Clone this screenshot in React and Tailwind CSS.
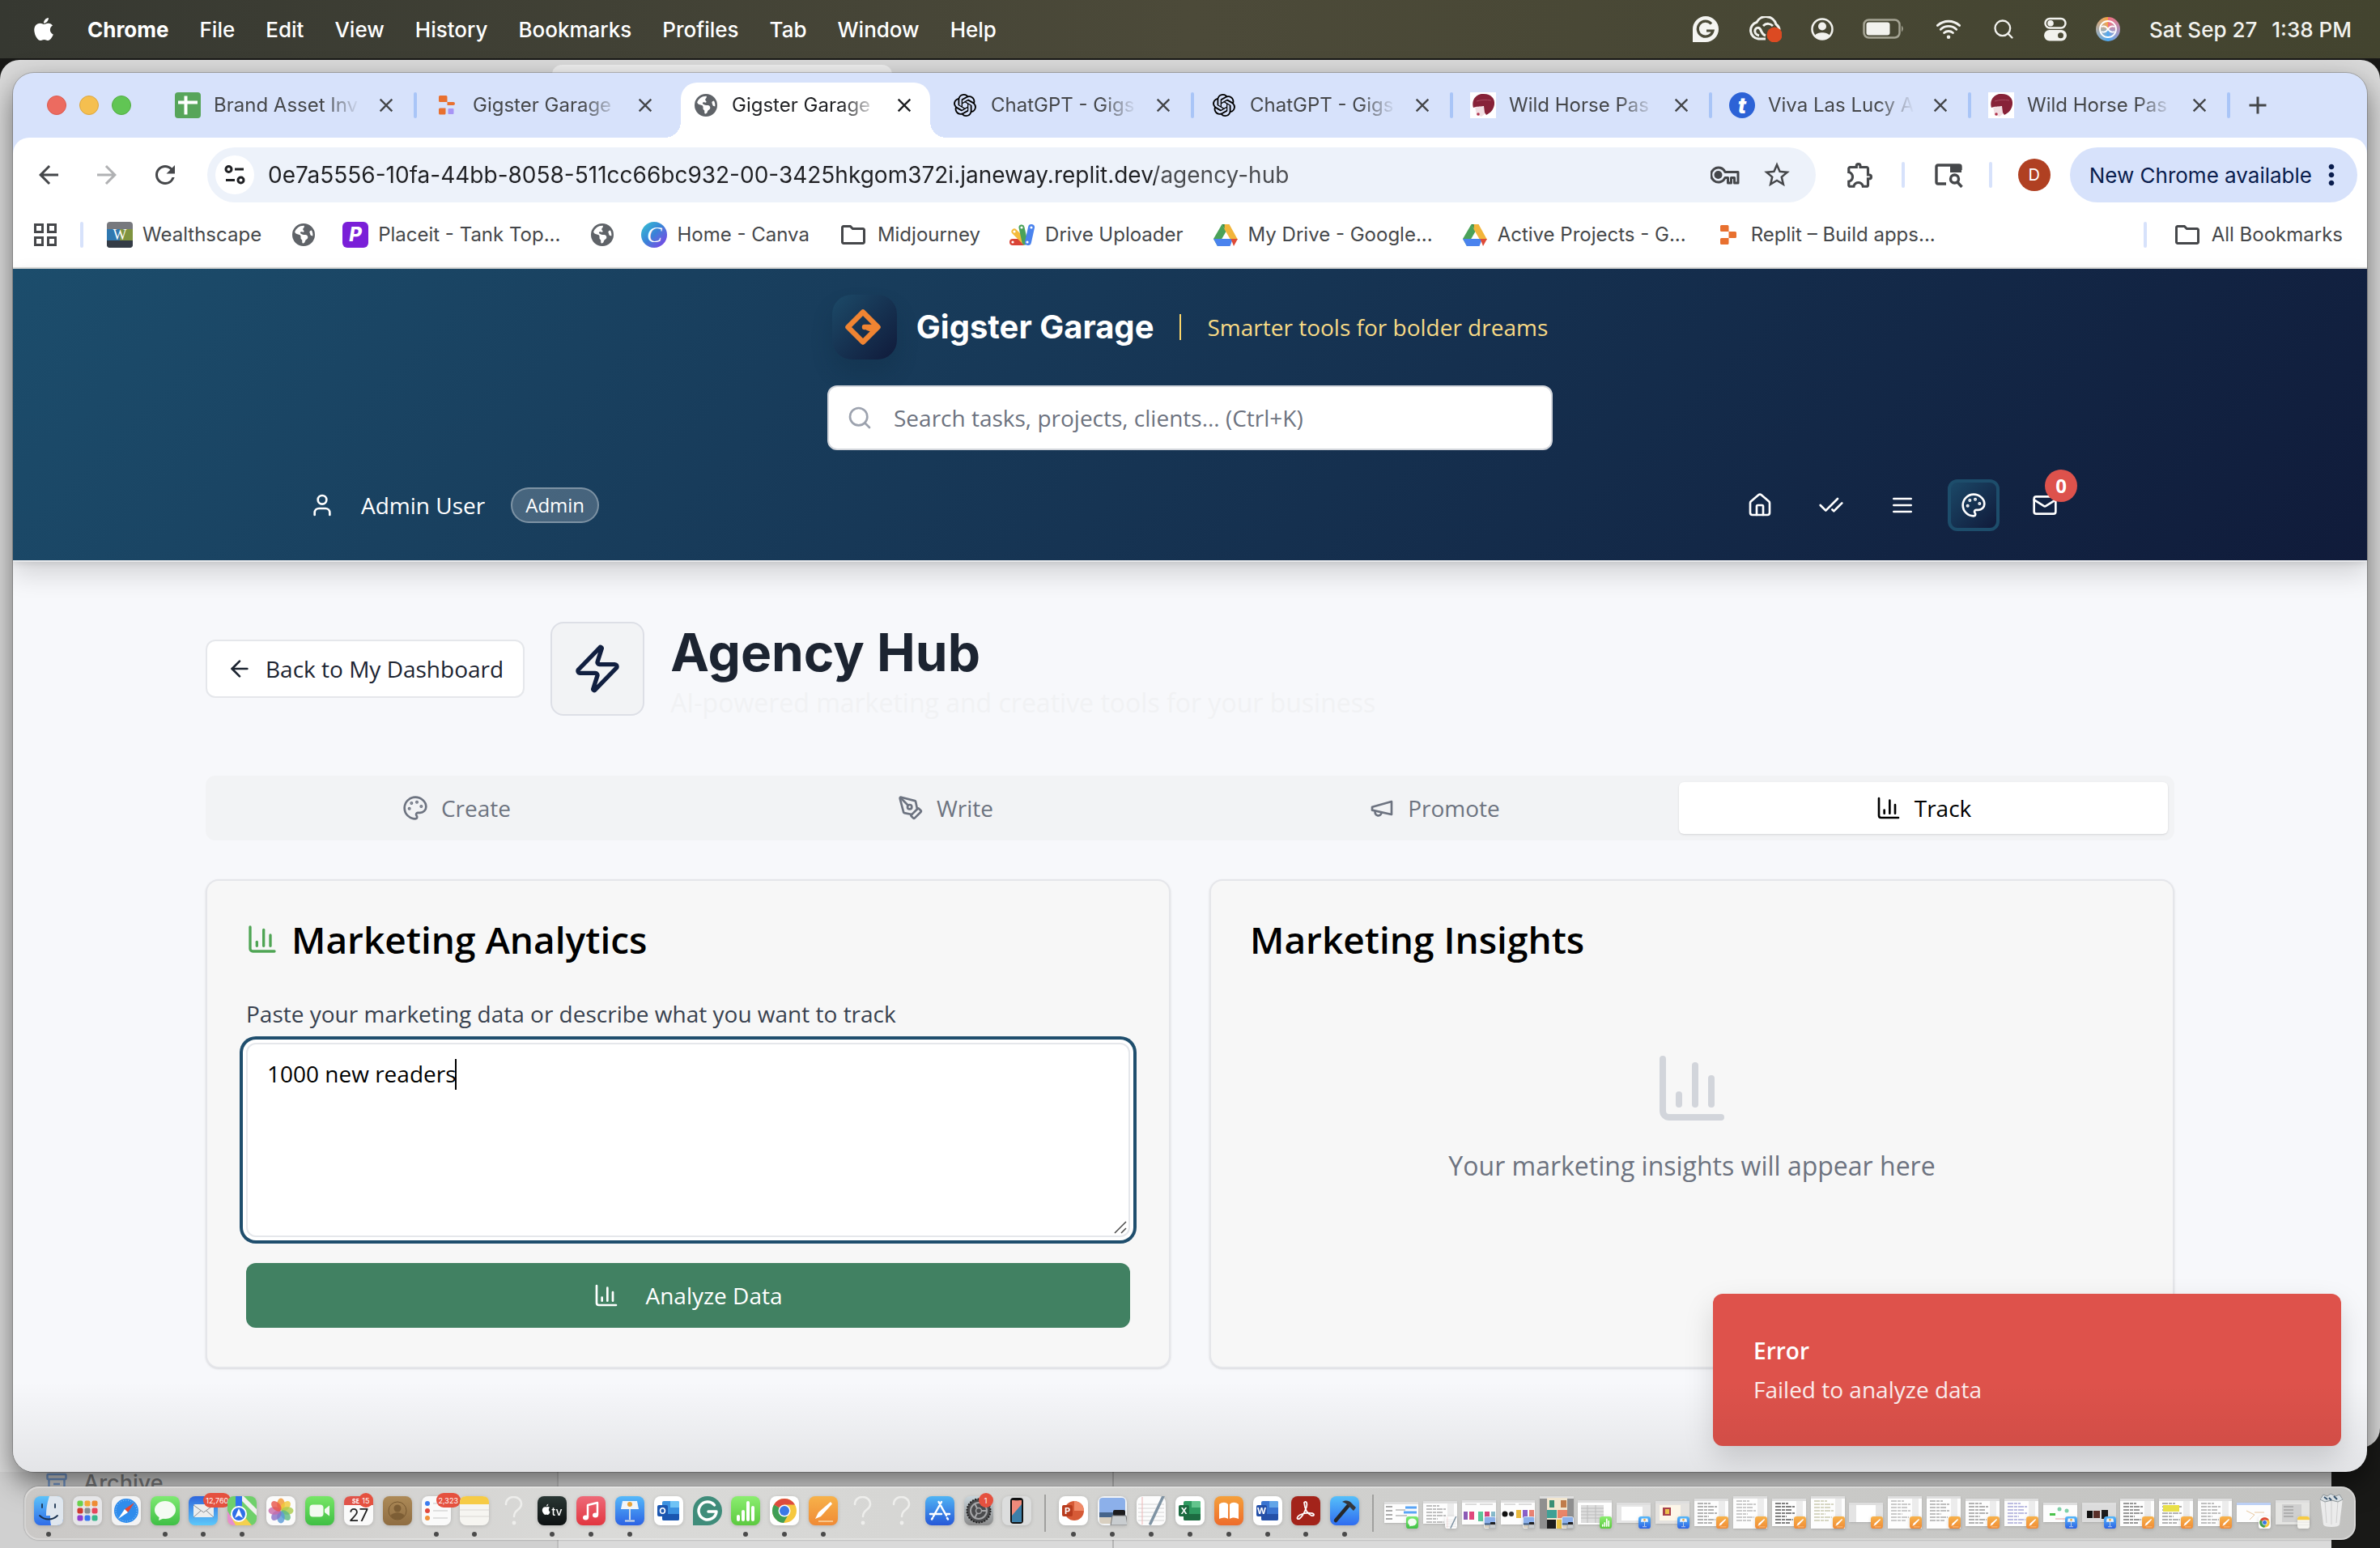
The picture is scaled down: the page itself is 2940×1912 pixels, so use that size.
import React from "react";
import { ArrowLeft, ChartColumn, CheckCheck, House, PenTool, Search, User, Zap } from "lucide-react";
import { FaApple, FaEarthAmericas } from "react-icons/fa6";
import { MdArrowBack, MdArrowForward, MdRefresh, MdStarBorder, MdOutlineExtension, MdOutlineFolder, MdClose, MdAdd, MdMoreVert } from "react-icons/md";
import { SiOpenai } from "react-icons/si";
import { IoWifi } from "react-icons/io5";

/* ---------- shared line icons ---------- */

function Line({ className, children }) {
  return (
    <svg viewBox="0 0 24 24" fill="none" stroke="currentColor" strokeWidth="2" strokeLinecap="round" strokeLinejoin="round" className={className} aria-hidden="true">
      {children}
    </svg>
  );
}

function Palette({ className }) {
  return (
    <Line className={className}>
      <circle cx="13.5" cy="6.5" r=".5" fill="currentColor" />
      <circle cx="17.5" cy="10.5" r=".5" fill="currentColor" />
      <circle cx="8.5" cy="7.5" r=".5" fill="currentColor" />
      <circle cx="6.5" cy="12.5" r=".5" fill="currentColor" />
      <path d="M12 2C6.5 2 2 6.5 2 12s4.5 10 10 10c.926 0 1.648-.746 1.648-1.688 0-.437-.18-.835-.437-1.125-.29-.289-.438-.652-.438-1.125a1.64 1.64 0 0 1 1.668-1.668h1.996c3.051 0 5.555-2.503 5.555-5.554C21.965 6.012 17.461 2 12 2z" />
    </Line>
  );
}

function Megaphone({ className }) {
  return (
    <Line className={className}>
      <path d="m3 11 18-5v12L3 14v-3z" />
      <path d="M11.6 16.8a3 3 0 1 1-5.8-1.6" />
    </Line>
  );
}

function MailIcon({ className }) {
  return (
    <Line className={className}>
      <rect width="20" height="16" x="2" y="4" rx="2" />
      <path d="m22 7-8.97 5.7a1.94 1.94 0 0 1-2.06 0L2 7" />
    </Line>
  );
}

function MenuLines({ className }) {
  return (
    <Line className={className}>
      <path d="M4 6h16M4 12h16M4 18h16" />
    </Line>
  );
}

/* ---------- macOS menu bar ---------- */

const menus = ["File", "Edit", "View", "History", "Bookmarks", "Profiles", "Tab", "Window", "Help"];

function MenuBar() {
  return (
    <header className="relative flex h-[72px] items-center justify-between bg-linear-to-r from-[#363831] via-[#4c4a39] to-[#43442f] pr-[35px] pl-[38px] text-[26px] font-medium text-white">
      <nav className="flex items-center gap-[38px]" aria-label="Menu bar">
        <button aria-label="Apple menu"><FaApple className="size-8" /></button>
        <button className="font-bold">Chrome</button>
        {menus.map((m) => (
          <button key={m}>{m}</button>
        ))}
      </nav>
      <div className="flex items-center gap-9 text-[#f2f2ee]">
        <svg viewBox="0 0 32 32" className="size-8">
          <path d="M0 32V16A16 16 0 1 1 16 32z" fill="#f5f5f2" />
          <path d="M23 9.500A9.500 9.500 0 1 0 25 18H17" fill="none" stroke="#4b4a38" strokeWidth="3.200" />
        </svg>
        <svg viewBox="0 0 42 32" className="h-8 w-[42px]" fill="none" stroke="#f2f2ee" strokeWidth="3">
          <path d="M22 28H13a10.500 10.500 0 0 1-2-20.500A13 13 0 0 1 35 10q4 3 4 7" />
          <path d="M22 24c-4-1-4-3-6-7-2-4-6-3-7 0s1 6 5 7M19 12c4-4 9-3 12 0" />
          <circle cx="33" cy="23" r="9.500" fill="#dc4a22" stroke="none" />
        </svg>
        <svg viewBox="0 0 28 28" className="size-7" fill="#f2f2ee">
          <circle cx="14" cy="14" r="12.500" fill="none" stroke="#f2f2ee" strokeWidth="2.500" />
          <circle cx="14" cy="10.500" r="5" />
          <path d="M5 22c2-5 16-5 18 0-4 6-14 6-18 0z" />
        </svg>
        <svg viewBox="0 0 52 26" className="h-[26px] w-[52px]">
          <rect x="1.500" y="1.500" width="44" height="22" rx="6" fill="none" stroke="#a5a494" strokeWidth="2.500" />
          <rect x="4.500" y="4.500" width="29" height="16" rx="3" fill="#f2f2ee" />
          <path d="M48 8.500q3.500 4 0 8z" fill="#a5a494" />
        </svg>
        <IoWifi className="size-9" />
        <Search className="size-7" />
        <svg viewBox="0 0 28 30" className="h-[30px] w-7">
          <rect x="1.500" y="2" width="25" height="11.500" rx="5.700" fill="none" stroke="#f2f2ee" strokeWidth="2.500" />
          <circle cx="8" cy="7.700" r="3.800" fill="#f2f2ee" />
          <rect x="0" y="16" width="28" height="13.500" rx="6.700" fill="#f2f2ee" />
          <circle cx="20.500" cy="22.700" r="3.500" fill="#4a4935" />
        </svg>
        <span className="flex size-[30px] items-center justify-center rounded-full bg-conic from-[#f26a7c] via-[#4aa8f0] to-[#f6a23c]">
          <svg viewBox="0 0 24 24" className="size-6" fill="none" stroke="#fff" strokeWidth="1.800">
            <circle cx="12" cy="12" r="10" />
            <path d="M4 9c4-2 6 0 8 3s4 5 8 3M4 15c4 2 6 0 8-3s4-5 8-3" />
          </svg>
        </span>
        <span className="flex gap-[18px] whitespace-nowrap">
          <span>Sat Sep 27</span>
          <span>1:38 PM</span>
        </span>
      </div>
    </header>
  );
}

/* ---------- favicons ---------- */

function SheetsIcon() {
  return (
    <svg viewBox="0 0 32 32" className="size-8">
      <rect width="32" height="32" rx="4" fill="#57a55a" />
      <path d="M13.500 4.500v23M4 12.500h24" stroke="#fff" strokeWidth="4" />
    </svg>
  );
}
function ReplitMulti() {
  return (
    <svg viewBox="0 0 32 32" className="size-8">
      <path d="M6 5.500q0-1.500 1.500-1.500H15q1.500 0 1.500 1.500V12H7.500Q6 12 6 10.500zM16.500 12H24q2 0 2 2t-2 2h-7.500zM6 21q0-1.500 1.500-1.500h7V26q0 1.500-1.500 1.500H7.500Q6 27.500 6 26z" fill="#e8702f" />
      <rect x="17.500" y="20" width="7" height="7" rx="1" fill="#a895f5" />
    </svg>
  );
}
function ReplitIcon({ className }) {
  return (
    <svg viewBox="0 0 20 24" className={className}>
      <path d="M0 1.500Q0 0 1.500 0H9q1.500 0 1.500 1.500V8H1.500Q0 8 0 6.500zM10.500 8h8q1.500 0 1.500 1.500v5q0 1.500-1.500 1.500h-8zM0 17.500Q0 16 1.500 16h9v6.500Q10.500 24 9 24H1.500Q0 24 0 22.500z" fill="#e8702f" />
    </svg>
  );
}
function HorseIcon() {
  return (
    <svg viewBox="0 0 32 32" className="size-8">
      <rect width="32" height="32" fill="#fff" />
      <path d="M6 18l2 10 6 2 5-4-1-8z" fill="#f1dfe3" />
      <path d="M4 19C1 8 9 1 17 2c9 0 14 6 13 13-1 6-4 10-10 13l-2-3-1-8c-5 1-9 0-13 2z" fill="#872238" />
      <path d="M8 11c6-2 12-2 18-1" stroke="#a84b60" strokeWidth="1" fill="none" />
      <circle cx="10" cy="27" r="1.800" fill="#b0304a" />
    </svg>
  );
}
function TixIcon() {
  return (
    <span className="flex size-8 items-center justify-center rounded-full bg-[#2c62d6] text-[27px] leading-none font-extrabold text-white italic">t</span>
  );
}
const Globe = () => <FaEarthAmericas className="size-7 text-[#5f6368]" />;
const Gpt = () => <SiOpenai className="size-[28px] text-black" />;

function DriveIcon() {
  return (
    <svg viewBox="0 0 30 27" className="h-[27px] w-[30px]">
      <path d="M10.500 0 0 18l5 9 10.500-18z" fill="#4ba259" />
      <path d="M10.500 0h9L15.500 9z" fill="#2f8a43" />
      <path d="M19.500 0h-5.800l-.2 6 7.500 13H30z" fill="#f2b53a" />
      <path d="M0 18h24l-3.500 9H5z" fill="#4a83ee" />
      <path d="M30 18h-8.500L25 27z" fill="#df4b37" />
    </svg>
  );
}
function UploaderIcon() {
  return (
    <svg viewBox="0 0 32 28" className="h-7 w-8">
      <rect x="0" y="19" width="20" height="8" rx="4" fill="#da4436" />
      <path d="m6 10 12 12" stroke="#f4bb3c" strokeWidth="7" strokeLinecap="round" />
      <path d="m15 5 4 18" stroke="#4aa25a" strokeWidth="7" strokeLinecap="round" />
      <path d="m27 5-4 18" stroke="#4a83ee" strokeWidth="8" strokeLinecap="round" />
      <g fill="#fff"><circle cx="4" cy="23" r="1.600" /><circle cx="6" cy="10" r="1.600" /><circle cx="15" cy="5" r="1.600" /><circle cx="27" cy="5" r="1.600" /><circle cx="22" cy="23" r="1.600" /></g>
    </svg>
  );
}

/* ---------- browser chrome ---------- */

const tabs = [
  { title: "Brand Asset Inv", icon: SheetsIcon },
  { title: "Gigster Garage", icon: ReplitMulti },
  { title: "Gigster Garage", icon: Globe, active: true },
  { title: "ChatGPT - Gigs", icon: Gpt },
  { title: "ChatGPT - Gigs", icon: Gpt },
  { title: "Wild Horse Pas", icon: HorseIcon },
  { title: "Viva Las Lucy A", icon: TixIcon },
  { title: "Wild Horse Pas", icon: HorseIcon },
];

function Tab({ title, icon: Icon, active, quiet }) {
  return (
    <div className="relative flex h-full min-w-0 max-w-[320px] flex-1 items-center">
      {active && (
        <div className="absolute inset-x-[6px] top-3 bottom-0 rounded-t-[20px] bg-white">
          <div className="absolute bottom-0 -left-5 size-5 bg-[radial-gradient(circle_at_0_0,transparent_20px,white_20px)]" />
          <div className="absolute -right-5 bottom-0 size-5 bg-[radial-gradient(circle_at_100%_0,transparent_20px,white_20px)]" />
        </div>
      )}
      <div className={active ? "relative flex w-full items-center pl-[21px] text-[#1f2023]" : "relative flex w-full items-center pl-[21px] text-[#45474a]"}>
        <span className="flex size-8 shrink-0 items-center justify-center"><Icon /></span>
        <span className="ml-4 min-w-0 flex-1 mask-r-from-75% text-[24px] leading-8 whitespace-nowrap">{title}</span>
        <button aria-label="Close tab" className="ml-[18px] flex size-7 shrink-0 items-center justify-center"><MdClose className="size-7" /></button>
        <span className={quiet ? "ml-[20px] h-8 w-1 shrink-0" : "ml-[20px] h-8 w-1 shrink-0 rounded-full bg-[#a9c5f7]"} />
      </div>
    </div>
  );
}

function TabStrip() {
  return (
    <div className="flex h-20 items-center bg-[#d7e2fb] pl-[42px]">
      <div className="mr-[33px] flex gap-4">
        <button aria-label="Close" className="size-6 rounded-full border border-[#dc5a4e] bg-[#ec6b60]" />
        <button aria-label="Minimise" className="size-6 rounded-full border border-[#dda63c] bg-[#f5bf4f]" />
        <button aria-label="Zoom" className="size-6 rounded-full border border-[#53ad42] bg-[#61c554]" />
      </div>
      {tabs.map((t, i) => (
        <Tab key={i} {...t} quiet={i === 1 || i === 2} />
      ))}
      <button aria-label="New tab" className="ml-4 flex size-9 items-center justify-center text-[#45474a]"><MdAdd className="size-9" /></button>
    </div>
  );
}

function Toolbar() {
  return (
    <div className="bg-[#d7e2fb]">
      <div className="flex h-20 items-center rounded-t-[20px] bg-white pt-3 pr-3 text-[#45474a]">
        <div className="flex items-center gap-9 pl-[26px]">
          <button aria-label="Back"><MdArrowBack className="size-9" /></button>
          <button aria-label="Forward" className="text-[#b0b1b3]"><MdArrowForward className="size-9" /></button>
          <button aria-label="Reload"><MdRefresh className="size-9" /></button>
        </div>
        <div className="ml-[34px] flex h-[68px] flex-1 items-center rounded-full bg-[#edf2fa] pl-[10px]">
          <button aria-label="Site information" className="flex size-12 shrink-0 items-center justify-center rounded-full bg-white text-[#1f2023]">
            <svg viewBox="0 0 26 26" className="size-[26px]" fill="none" stroke="currentColor" strokeWidth="3">
              <circle cx="5.500" cy="6" r="3.500" /><path d="M13 6h11" />
              <circle cx="20.500" cy="19.500" r="3.500" /><path d="M2 19.500h11" />
            </svg>
          </button>
          <input
            aria-label="Address"
            defaultValue="0e7a5556-10fa-44bb-8058-511cc66bc932-00-3425hkgom372i.janeway.replit.dev/agency-hub"
            className="ml-[17px] h-10 flex-1 bg-[linear-gradient(90deg,#1f2023_1096px,#4a4c50_1096px)] bg-clip-text text-[28px] text-transparent outline-none"
          />
          <svg viewBox="0 0 36 24" className="h-6 w-9" fill="none" stroke="currentColor" strokeWidth="3">
            <path d="M18 8.500a9 9 0 1 0 0 7h3.500V22h4v-6.500h4V22h4.500V8.500z" strokeLinejoin="round" />
            <circle cx="9.500" cy="12" r="3.500" fill="currentColor" />
          </svg>
          <button aria-label="Bookmark this page" className="mr-[29px] ml-[27px]"><MdStarBorder className="size-[38px]" /></button>
        </div>
        <div className="flex items-center">
          <button aria-label="Extensions" className="ml-9"><MdOutlineExtension className="size-[38px]" /></button>
          <span className="ml-[32px] h-8 w-1 rounded-full bg-[#d7e2fb]" />
          <svg viewBox="0 0 36 32" className="ml-[36px] h-8 w-9" fill="none" stroke="currentColor" strokeWidth="3.400">
            <path d="M15 27H5q-2 0-2-2V6q0-2 2-2h26q2 0 2 2v4" />
            <path d="M20 3h14v10H20z" fill="currentColor" stroke="none" />
            <circle cx="25.500" cy="21" r="5" /><path d="m29 25 5.500 6" />
          </svg>
          <span className="ml-[32px] h-8 w-1 rounded-full bg-[#d7e2fb]" />
          <span className="ml-8 flex size-10 items-center justify-center rounded-full bg-[#b04022] text-[20px] text-white">D</span>
          <button className="ml-6 flex h-[68px] items-center rounded-full bg-[#d7e2fb] pr-3 pl-6 text-[26px] whitespace-nowrap text-[#0a1d4d]">
            New Chrome available
            <MdMoreVert className="ml-1 size-10" />
          </button>
        </div>
      </div>
    </div>
  );
}

function Bookmark({ icon, label }) {
  return (
    <a href="#" className="flex items-center gap-3 whitespace-nowrap">
      <span className="flex min-w-8 justify-center">{icon}</span>
      {label && <span className="pr-1">{label}</span>}
    </a>
  );
}

function BookmarksBar() {
  return (
    <div className="flex h-[82px] items-center border-b-2 border-[#e0e0de] bg-white pr-[26px] pl-[26px] text-[24px] text-[#45474a]">
      <svg viewBox="0 0 28 28" className="size-7" fill="none" stroke="currentColor" strokeWidth="3">
        <rect x="1.500" y="1.500" width="9" height="9" /><rect x="17.500" y="1.500" width="9" height="9" />
        <rect x="1.500" y="17.500" width="9" height="9" /><rect x="17.500" y="17.500" width="9" height="9" />
      </svg>
      <span className="mr-[29px] ml-[29px] h-8 w-1 rounded-full bg-[#d7e2fb]" />
      <nav aria-label="Bookmarks" className="flex items-center gap-8">
        <Bookmark
          label="Wealthscape"
          icon={
            <svg viewBox="0 0 32 32" className="size-8">
              <rect width="32" height="32" rx="4" fill="#77797e" />
              <path d="M0 9h16v14H0z" fill="#2f78b0" /><path d="M16 9h16v14H16z" fill="#7f9440" />
              <path d="M0 23h32v5q0 4-4 4H4q-4 0-4-4z" fill="#343c46" />
              <text x="16" y="22" fontSize="18" fontFamily="Liberation Serif" fill="#fff" textAnchor="middle">W</text>
            </svg>
          }
        />
        <Bookmark icon={<Globe />} />
        <Bookmark label="Placeit - Tank Top..." icon={<span className="flex size-8 items-center justify-center rounded-md bg-[#7a1fd8] text-[24px] font-extrabold text-white italic">P</span>} />
        <Bookmark icon={<Globe />} />
        <Bookmark label="Home - Canva" icon={<span className="flex size-8 items-center justify-center rounded-full bg-linear-to-br from-[#35c5cf] via-[#3b7fd8] to-[#7a2be8] font-['Liberation_Serif'] text-[28px] leading-none text-white italic">C</span>} />
        <Bookmark label="Midjourney" icon={<MdOutlineFolder className="size-9" />} />
        <Bookmark label="Drive Uploader" icon={<UploaderIcon />} />
        <Bookmark label="My Drive - Google..." icon={<DriveIcon />} />
        <Bookmark label="Active Projects - G..." icon={<DriveIcon />} />
        <Bookmark label="Replit – Build apps..." icon={<ReplitIcon className="h-6 w-5" />} />
      </nav>
      <span className="mr-[32px] ml-auto h-8 w-1 rounded-full bg-[#d7e2fb]" />
      <Bookmark label="All Bookmarks" icon={<MdOutlineFolder className="size-9" />} />
    </div>
  );
}

/* ---------- Gigster Garage page ---------- */

function AppHeader() {
  return (
    <header className="relative flex flex-col items-center border-b-2 border-[#e9eaec] bg-[linear-gradient(135deg,#1c4d6c,#101b3a)] bg-clip-padding pt-8 pb-[36px] text-white shadow-[0_16px_30px_rgba(0,0,0,0.14),0_2px_8px_rgba(0,0,0,0.1)]">
      <div className="flex items-center">
        <span className="flex size-20 items-center justify-center rounded-3xl bg-[linear-gradient(135deg,#1c4a68,#101a3a)] shadow-[0_16px_24px_rgba(10,40,60,0.25)]">
          <svg viewBox="0 0 46 46" className="mr-1 size-[46px]" fill="none" stroke="#f08432" strokeWidth="6.500" strokeLinejoin="round" strokeLinecap="round">
            <path d="M41.500 23 23 41.500 4.500 23 23 4.500 41.500 23H25" />
            <path d="m38 25-10 1 6 2z" fill="#f08432" strokeWidth="2" />
          </svg>
        </span>
        <span className="ml-6 font-['Inter'] text-[40px] leading-[56px] font-bold">Gigster Garage</span>
        <span className="mx-[32px] h-8 w-[2px] bg-[#fbd56a]" />
        <span className="text-[28px] leading-10 font-medium text-[#f8da85]">Smarter tools for bolder dreams</span>
      </div>
      <label className="mt-8 flex h-20 w-[896px] items-center rounded-xl border-2 border-[#d3d6dc] bg-white pl-[22px] text-[#9ca2ae]">
        <Search className="size-8" />
        <input aria-label="Search" placeholder="Search tasks, projects, clients... (Ctrl+K)" className="ml-[26px] h-full flex-1 text-[28px] text-gray-800 outline-none placeholder:text-[#6d7380]" />
      </label>
      <div className="mt-9 flex h-16 w-full max-w-[2176px] items-center justify-between">
        <div className="flex items-center text-[28px] font-medium">
          <User className="size-8" />
          <span className="ml-8">Admin User</span>
          <span className="ml-8 flex h-11 items-center rounded-full border-2 border-white/30 bg-white/20 px-4 text-[24px]">Admin</span>
        </div>
        <nav aria-label="Main" className="flex gap-6">
          <button aria-label="Home" className="flex size-16 items-center justify-center"><House className="size-8" /></button>
          <button aria-label="Tasks" className="flex size-16 items-center justify-center"><CheckCheck className="size-8" /></button>
          <button aria-label="Menu" className="flex size-16 items-center justify-center"><MenuLines className="size-8" /></button>
          <button aria-label="Agency hub" className="flex size-16 items-center justify-center rounded-xl border-4 border-[#1d4d6b] bg-[linear-gradient(135deg,#1b4867,#101a3a)]"><Palette className="size-8" /></button>
          <button aria-label="Messages" className="relative flex size-16 items-center justify-center">
            <MailIcon className="size-8" />
            <span className="absolute -top-3 -right-2 flex size-10 items-center justify-center rounded-full bg-[#dd524c] text-[24px] font-bold">0</span>
          </button>
        </nav>
      </div>
    </header>
  );
}

const sections = [
  { label: "Create", icon: Palette },
  { label: "Write", icon: PenTool },
  { label: "Promote", icon: Megaphone },
  { label: "Track", icon: ChartColumn, active: true },
];

function HubPage() {
  return (
    <main className="flex flex-1 flex-col bg-[#f7f8fb] px-[238px] pt-[66px] pb-32">
      <div className="flex items-center gap-8">
        <button className="flex h-[72px] items-center gap-4 rounded-xl border-2 border-[#e5e7eb] bg-white px-6 text-[28px] font-medium text-[#1c2431]">
          <ArrowLeft className="size-8" />
          Back to My Dashboard
        </button>
        <span className="flex size-[116px] items-center justify-center rounded-2xl border-2 border-[#dddfe6] bg-[#f2f3f5] text-[#111f40]">
          <Zap className="size-16" />
        </span>
        <div className="pt-2">
          <h1 className="font-['Inter'] text-[64px] leading-[76px] font-bold text-[#1c2431]">Agency Hub</h1>
          <p className="text-[32px] leading-[48px] text-[#f1f2f4]">AI-powered marketing and creative tools for your business</p>
        </div>
      </div>

      <div role="tablist" className="mt-[66px] grid h-20 grid-cols-4 rounded-xl bg-[#f2f3f5] p-2">
        {sections.map(({ label, icon: Icon, active }) => (
          <button
            key={label}
            role="tab"
            aria-selected={!!active}
            className={
              active
                ? "flex items-center justify-center gap-4 rounded-md bg-white text-[28px] font-medium text-black shadow-sm"
                : "flex items-center justify-center gap-4 rounded-md text-[28px] font-medium text-[#6d7380]"
            }
          >
            <Icon className="size-8" />
            {label}
          </button>
        ))}
      </div>

      <div className="mt-12 grid grid-cols-2 gap-12">
        <section className="flex flex-col rounded-2xl border-2 border-[#e5e6ea] bg-[#f7f7f7] p-12 shadow-sm">
          <h2 className="flex h-12 items-center gap-4 text-[46px] leading-[48px] font-semibold text-black">
            <ChartColumn className="size-10 text-[#4fa554]" />
            Marketing Analytics
          </h2>
          <label htmlFor="data" className="mt-12 text-[28px] leading-10 font-medium text-[#39424f]">
            Paste your marketing data or describe what you want to track
          </label>
          <div className="relative mt-4">
            <textarea
              id="data"
              defaultValue="1000 new readers"
              className="block h-60 w-full resize-none rounded-xl border-2 border-[#e5e7eb] bg-white px-6 py-4 text-[28px] leading-10 text-black ring-4 ring-[#1f4e6d] ring-offset-4 ring-offset-white outline-none"
            />
            <span className="absolute top-5 left-[258px] h-[38px] w-[2px] bg-black" />
            <svg viewBox="0 0 16 16" className="absolute right-1 bottom-1 size-4" stroke="#4a4a4a" strokeWidth="1.500">
              <path d="M1 15 15 1M9 15l6-6" />
            </svg>
          </div>
          <button className="mt-8 flex h-20 items-center justify-center gap-8 rounded-xl bg-[#418162] text-[28px] font-medium text-white">
            <ChartColumn className="size-8" />
            Analyze Data
          </button>
        </section>

        <section className="rounded-2xl border-2 border-[#e5e6ea] bg-[#f7f7f7] p-12 shadow-sm">
          <h2 className="flex h-12 items-center text-[46px] leading-[48px] font-semibold text-black">Marketing Insights</h2>
          <div className="mt-12 flex flex-col items-center py-16">
            <ChartColumn className="size-24 text-[#d2d5db]" />
            <p className="mt-6 text-[32px] leading-[48px] text-[#6d7380]">Your marketing insights will appear here</p>
          </div>
        </section>
      </div>
    </main>
  );
}

function BrowserWindow() {
  return (
    <div className="relative mx-4 mt-[18px] flex flex-1 flex-col overflow-hidden rounded-[26px] shadow-[0_14px_34px_rgba(0,0,0,0.5)] outline outline-black/20">
      <TabStrip />
      <Toolbar />
      <BookmarksBar />
      <div className="relative flex flex-1 flex-col font-['Open_Sans',sans-serif]">
        <AppHeader />
        <HubPage />
        <div role="alert" className="absolute right-8 bottom-8 w-[776px] rounded-xl bg-[#de524b] px-[50px] py-12 text-[28px] text-white shadow-[0_16px_36px_rgba(0,0,0,0.15)]">
          <p className="leading-[44px] font-semibold">Error</p>
          <p className="mt-1 leading-[44px] text-white/90">Failed to analyze data</p>
        </div>
        <div className="pointer-events-none absolute inset-x-0 bottom-0 h-28 bg-linear-to-b from-transparent to-black/8" />
      </div>
    </div>
  );
}

/* ---------- dock ---------- */

function Tile({ from, children, fill }) {
  return (
    <svg viewBox="0 0 36 36" className="size-9 drop-shadow-sm">
      <defs>
        {from && (
          <linearGradient id={"g" + from.join("").replace(/#/g, "")} x1="0" y1="0" x2="0" y2="1">
            <stop offset="0" stopColor={from[0]} /><stop offset="1" stopColor={from[1]} />
          </linearGradient>
        )}
      </defs>
      <rect width="36" height="36" rx="8" fill={from ? "url(#g" + from.join("").replace(/#/g, "") + ")" : fill} />
      {children}
    </svg>
  );
}

const white = { fill: "none", stroke: "#fff", strokeWidth: 2.5, strokeLinecap: "round", strokeLinejoin: "round" };

function Letter({ children, x = 18, y = 24, size = 18, color = "#fff", weight = 700 }) {
  return <text x={x} y={y} fontSize={size} fill={color} fontWeight={weight} fontFamily="Inter" textAnchor="middle">{children}</text>;
}

function Office({ dark, mid, light, letter, round }) {
  return (
    <Tile fill="#fff">
      {round ? <circle cx="19" cy="18" r="12" fill={mid} /> : <rect x="10" y="6" width="21" height="24" rx="2" fill={mid} />}
      {round ? <path d="M19 6a12 12 0 0 1 12 12H19z" fill={light} /> : <path d="M20 6h9q2 0 2 2v6H20z" fill={light} />}
      {!round && <path d="M10 22h21v6q0 2-2 2H12q-2 0-2-2z" fill={dark} />}
      <rect x="4" y="11" width="13" height="14" rx="2" fill={dark} />
      <Letter x={10.5} y={22} size={11}>{letter}</Letter>
    </Tile>
  );
}

const Finder = () => (
  <Tile from={["#5cc3fa", "#2f6ce8"]}>
    <path d="M19 0h9q8 0 8 8v20q0 8-8 8h-7c-1-4-1-8-1-12h-5C15 14 17 6 19 0z" fill="#dfe6ee" />
    <path d="M10 10v4M26 10v4M7 24c6 6 16 6 22 0" fill="none" stroke="#1c3350" strokeWidth="1.800" strokeLinecap="round" />
  </Tile>
);
const Launchpad = () => (
  <Tile fill="#e6e6e8">
    {["#6ad14c", "#f2a93a", "#ee8c34", "#cf3a30", "#8b8d90", "#e8465c", "#8f3fd0", "#3878f0", "#3bb88c"].map((c, i) => (
      <rect key={i} x={5.5 + (i % 3) * 9} y={5.5 + Math.floor(i / 3) * 9} width="7" height="7" rx="2" fill={c} />
    ))}
  </Tile>
);
const Safari = () => (
  <Tile fill="#f3f3f4">
    <circle cx="18" cy="18" r="15" fill="#2f8cec" />
    <circle cx="18" cy="18" r="13" fill="none" stroke="#a8d3fa" strokeWidth="1" strokeDasharray="1 2" />
    <path d="m28 8-8 12-4-4z" fill="#e8452f" /><path d="M8 28l8-12 4 4z" fill="#fff" />
  </Tile>
);
const Messages = () => (
  <Tile from={["#7eea72", "#3fbf45"]}>
    <ellipse cx="18" cy="17" rx="13" ry="11" fill="#f4fbf3" /><path d="m11 24-1 6 7-3z" fill="#f4fbf3" />
  </Tile>
);
const Mail = () => (
  <Tile from={["#2f66dc", "#5cc8fa"]}>
    <rect x="6" y="10" width="25" height="16" rx="2" fill="#eceded" /><path d="m6 11 12.500 9L31 11M6 26l9-8M31 26l-9-8" fill="none" stroke="#8a8d92" strokeWidth="1" />
  </Tile>
);
const Maps = () => (
  <Tile fill="#6fd06a">
    <path d="M0 24h20l10 12H8q-8 0-8-8z" fill="#f4d04e" /><path d="M0 18l10 18H8q-8 0-8-8z" fill="#e58fd0" />
    <path d="M20 0 36 16v8L12 0z" fill="#f1f1ee" /><path d="M10 0h8v20h-8z" fill="#2f74ee" />
    <circle cx="14" cy="22" r="9" fill="#2f6fe8" stroke="#fff" strokeWidth="2" /><path d="m14 15 5 12-5-3-5 3z" fill="#fff" />
  </Tile>
);
const Photos = () => (
  <Tile fill="#fbfbfb">
    {["#f2962f", "#f0c93a", "#a9cc4c", "#5fb985", "#5a9ad8", "#8b72c6", "#c86ba8", "#e8574c"].map((c, i) => (
      <ellipse key={i} cx="18" cy="10" rx="4.800" ry="7.500" fill={c} opacity="0.82" transform={"rotate(" + i * 45 + " 18 18)"} />
    ))}
  </Tile>
);
const FaceTime = () => (
  <Tile from={["#77e667", "#40bf44"]}>
    <rect x="5.500" y="10.500" width="17" height="15" rx="4" fill="#f2faf1" /><path d="m24 16 6-4.500v13L24 20z" fill="#f2faf1" />
  </Tile>
);
const Calendar = () => (
  <Tile fill="#fafafa">
    <path d="M0 11V8q0-8 8-8h20q8 0 8 8v3z" fill="#e0544a" />
    <Letter x={17} y={9} size={7.5}>SEP</Letter>
    <Letter y={31} size={21} color="#222" weight={400}>27</Letter>
  </Tile>
);
const Contacts = () => (
  <Tile from={["#ad8a57", "#8f6d42"]}>
    <circle cx="18" cy="18" r="11" fill="none" stroke="#76582f" strokeWidth="1" /><circle cx="18" cy="15" r="4.500" fill="#7d5e35" /><path d="M9.500 24c4-5 13-5 17 0-4 6-13 6-17 0z" fill="#7d5e35" />
  </Tile>
);
const Reminders = () => (
  <Tile fill="#fafafa">
    {["#3c7df0", "#e2493c", "#f0913a"].map((c, i) => (
      <g key={c}><circle cx="7" cy={9 + i * 9} r="3" fill={c} /><path d={"M14 " + (9 + i * 9) + "h18"} stroke="#c5c5c5" /></g>
    ))}
  </Tile>
);
const Notes = () => (
  <Tile fill="#f6f5f1">
    <path d="M0 10V8q0-8 8-8h20q8 0 8 8v2z" fill="#f6cb45" /><path d="M0 17h36M0 25h36" stroke="#d9d8d3" />
  </Tile>
);
const Missing = () => (
  <svg viewBox="0 0 36 36" className="size-9" fill="none" stroke="#eeeeec" strokeWidth="2.500" strokeLinecap="round">
    <path d="M9 10c0-12 19-12 19 0 0 7-9 6-9 15" /><circle cx="19" cy="33" r="1.200" />
  </svg>
);
const AppleTv = () => (
  <Tile from={["#2a3734", "#0d1112"]}>
    <path d="M11 13.500c1.500-1 3-.5 4 .5-2 2-1 4.500.5 5.500-1.500 4-3 4-4.500 3-1.500 1-3 .5-4.500-2.500-2-4.500 1-8 4.500-6.500zM11 12.500q0-2.500 2.500-3-.5 2.500-2.500 3z" fill="#fff" />
    <Letter x={24} y={23.500} size={14} weight={500}>tv</Letter>
  </Tile>
);
const Music = () => (
  <Tile from={["#ee6a78", "#e23640"]}>
    <path d="M14 26V11l12-3v15" {...white} /><ellipse cx="11.500" cy="26.500" rx="3.500" ry="3" fill="#fff" /><ellipse cx="23.500" cy="23.500" rx="3.500" ry="3" fill="#fff" />
  </Tile>
);
const Keynote = () => (
  <Tile from={["#55b9fa", "#2c62e4"]}>
    <path d="M9 6h18l2 10H7z" fill="#f2f5f8" /><circle cx="18" cy="10" r="3" fill="#e5a33a" /><path d="M18 16v13M12 30.500h12" stroke="#d5dde6" strokeWidth="2" />
  </Tile>
);
const Outlook = () => <Office dark="#1a56b0" mid="#3b91e0" light="#6fc3f5" letter="O" />;
const Grammarly = () => (
  <svg viewBox="0 0 36 36" className="size-9">
    <path d="M0 36V18a18 18 0 1 1 18 18z" fill="#3f8c7a" /><path d="M26.500 11A11 11 0 1 0 29 19H19" {...white} strokeWidth="3.500" />
  </svg>
);
const Numbers = () => (
  <Tile from={["#8bee70", "#5cc93f"]}>
    <path d="M9 29v-4M15 29V19M21 29V8M27 29V14" stroke="#fff" strokeWidth="4" strokeLinecap="round" />
  </Tile>
);
const Chrome = () => (
  <Tile fill="#fff">
    <circle cx="18" cy="18" r="15" fill="#f6c83e" />
    <path d="M18 18 5 10.500A15 15 0 0 1 31 10.500H18z" fill="#dd4b3e" />
    <path d="M5 10.500A15 15 0 0 0 17 33l6.500-11.500L18 18z" fill="#3f9e55" />
    <circle cx="18" cy="18" r="7.500" fill="#fff" /><circle cx="18" cy="18" r="6" fill="#3b78e7" />
  </Tile>
);
const Pages = () => (
  <Tile from={["#f7b24a", "#f08a35"]}>
    <path d="m8 28 4-8L27 7l2 2.500L15 25z" fill="#fff" /><path d="M12 31h18" stroke="#fbd9a8" strokeWidth="1.500" />
  </Tile>
);
const AppStore = () => (
  <Tile from={["#4fb4f4", "#2658d8"]}>
    <path d="m20 7-10 18M16.500 7 26 24M6 22h14M25 22h5M9 27l-1 1.500M27 27l1 1.500" {...white} />
  </Tile>
);
const Settings = () => (
  <Tile from={["#c9d5db", "#8b8b8b"]}>
    <circle cx="18" cy="18" r="14.500" fill="#4a4b4d" stroke="#222" strokeWidth="2" strokeDasharray="2 1.500" />
    <circle cx="18" cy="18" r="10" fill="none" stroke="#a5a6a8" strokeWidth="2" /><circle cx="18" cy="18" r="3.500" fill="none" stroke="#a5a6a8" strokeWidth="1.500" />
    <path d="M21.500 18H28M16 15l-3-6M16 21l-3 6" stroke="#a5a6a8" strokeWidth="2" />
  </Tile>
);
const Phone = () => (
  <Tile fill="#dcdddd">
    <rect x="10" y="2" width="16" height="32" rx="4" fill="#111" /><path d="M12 5h12v12L12 26z" fill="#ef8a7a" /><path d="M24 10v22H12v-8z" fill="#3d7fa8" /><path d="M16 4h4" {...white} stroke="#111" />
  </Tile>
);
const PowerPoint = () => <Office dark="#b83c1e" mid="#d65a36" light="#f08a68" letter="P" round />;
const Preview = () => (
  <Tile fill="#f2f4f6">
    <path d="M2 6q0-4 4-4h24q4 0 4 4v16H2z" fill="#8cb0ea" /><path d="M2 20h32v6H2z" fill="#46648a" /><path d="M2 26h32v4q0 4-4 4H6q-4 0-4-4z" fill="#d8cfc0" />
    <rect x="19" y="17" width="15" height="7" rx="2" fill="#1c1c1e" /><path d="M18 24h17l2 12H16z" fill="#c9cdd0" stroke="#777" />
  </Tile>
);
const TextEdit = () => (
  <Tile fill="#fcfcfc">
    <path d="M2 10h32M2 15h32M2 20h32M2 25h32M2 30h32" stroke="#d4d4d4" /><path d="M7 1v34" stroke="#eeb5b5" />
    <path d="M33 0 17 34" stroke="#7f93a3" strokeWidth="3.500" strokeLinecap="round" />
  </Tile>
);
const Excel = () => <Office dark="#1d6b41" mid="#2f9a60" light="#62c48c" letter="X" />;
const Word = () => <Office dark="#2450a8" mid="#3a74d0" light="#62a5e8" letter="W" />;
const Books = () => (
  <Tile from={["#f5a03a", "#ee6c2c"]}>
    <path d="M17 28c-3-2-7-2-11 0V10c4-3 8-3 11 0zM19 28c3-2 7-2 11 0V10c-4-3-8-3-11 0z" fill="#fff" />
  </Tile>
);
const Acrobat = () => (
  <Tile fill="#a3231a">
    <path d="M16 8c3-3 4 1 3 5-2 6-5 12-9 15-4 1-3-3 1-5 5-2 10-3 14-2 5 1 3 4 0 3-5-2-8-7-9-16z" {...white} strokeWidth="1.800" />
  </Tile>
);
const Xcode = () => (
  <Tile from={["#56c0fa", "#2f6cf0"]}>
    <path d="m7 30 17-20" stroke="#26282b" strokeWidth="4.500" strokeLinecap="round" /><path d="M15 7c5-3 9-1 11 1l6 6-3 4-7-7c-2-2-4-3-7-4z" fill="#35383c" />
  </Tile>
);

const mainApps = [
  { icon: Finder, on: true }, { icon: Launchpad }, { icon: Safari }, { icon: Messages, on: true },
  { icon: Mail, on: true, badge: "12,760" }, { icon: Maps, on: true }, { icon: Photos }, { icon: FaceTime },
  { icon: Calendar, badge: "15" }, { icon: Contacts }, { icon: Reminders, on: true, badge: "2,323" }, { icon: Notes, on: true },
  { icon: Missing }, { icon: AppleTv, on: true }, { icon: Music, on: true }, { icon: Keynote, on: true }, { icon: Outlook },
  { icon: Grammarly }, { icon: Numbers, on: true }, { icon: Chrome, on: true }, { icon: Pages, on: true },
  { icon: Missing }, { icon: Missing }, { icon: AppStore }, { icon: Settings, badge: "1" }, { icon: Phone },
];
const moreApps = [PowerPoint, Preview, TextEdit, Excel, Books, Word, Acrobat, Xcode].map((icon) => ({ icon, on: true }));

const stripes = "M4 6h16M4 10h24M4 14h20M4 18h24M4 22h14M4 26h22M4 30h18";
const thumbs = [
  { h: 26, badge: Messages, art: <><path d="M2 6h8M2 11h8M2 16h8M2 21h8" stroke="#aaa" strokeWidth="2" /><path d="M26 7h14M24 13h16" stroke="#5aa5f5" strokeWidth="3" /><path d="M14 10h12M14 17h14" stroke="#c9c9c9" strokeWidth="2" /></> },
  { h: 28, badge: TextEdit, lines: "#aaa" },
  { h: 30, badge: Preview, art: <><path d="M2 14h5v10H2z" fill="#8c5bb5" /><path d="M9 14h6v10H9z" fill="#e0487c" /><path d="M20 14h6v12h-6z" fill="#5cc79a" /><path d="M28 14h6v12h-6z" fill="#d8437a" /><path d="M36 14h5v9h-5z" fill="#8bc" /><path d="M4 5h14M22 5h16" stroke="#bbb" /></> },
  { h: 30, badge: Preview, art: <><circle cx="5" cy="17" r="3.500" fill="#111" /><circle cx="13" cy="17" r="3" fill="#333" /><path d="M19 12h6v10h-6z" fill="#e8b93e" /><path d="M27 12h6v10h-6z" fill="#8a5fc8" /><path d="M35 12h6v10h-6z" fill="#ea8272" /><path d="M4 5h14M22 5h16" stroke="#bbb" /></> },
  { h: 40, badge: Preview, bg: "#8f8f8f", art: <><path d="M9 2h25v38H9z" fill="#f2e6cf" /><path d="M12 5h6v9h-6z" fill="#3b8f74" /><path d="M26 5h7v9h-7z" fill="#c07c4a" /><path d="M9 17h12v10H9z" fill="#3fa095" /><path d="M22 17h12v10H22z" fill="#e98468" /><path d="M9 29h11v11H9z" fill="#1d1d1d" /><path d="M21 29h6v11h-6z" fill="#ecc645" /></> },
  { h: 30, badge: Numbers, art: <><path d="M4 6h28v22H4z" fill="#ddd" /><path d="M4 10h28M4 14h28M4 18h28M4 22h28M12 6v22M22 6v22" stroke="#bbb" /></> },
  { h: 25, badge: Keynote, bg: "#e6e6e6", art: <path d="M6 5h26v17H6z" fill="#fff" /> },
  { h: 28, badge: Keynote, bg: "#e4e2df", art: <><path d="M5 5h26v19H5z" fill="#fdf6e8" /><path d="M9 8h10v10H9z" fill="#a8414a" /><path d="M12 10h5v6h-5z" fill="#ecc04a" /></> },
  { h: 34, badge: Pages, lines: "#999" }, { h: 40, badge: Pages, lines: "#bbb" },
  { h: 34, badge: Pages, lines: "#555" }, { h: 40, badge: Pages, lines: "#c9c9b0" },
  { h: 24, badge: Pages, bg: "#e4e4e4", art: <path d="M9 3h24v22H9z" fill="#fff" /> }, { h: 40, badge: Pages, lines: "#bbb" }, { h: 40, badge: Pages, lines: "#aaa" },
  { h: 34, badge: Pages, lines: "#999" }, { h: 34, badge: Pages, lines: "#a8a8d8" },
  { h: 24, badge: Keynote, art: <><path d="M8 13h7v3H8z" fill="#4cc24c" /><circle cx="20" cy="8" r="2.500" fill="#7fd0a8" /><circle cx="29" cy="10" r="2.500" fill="#7fd0a8" /><path d="M15 20h12" stroke="#e0a0a0" /></> },
  { h: 24, badge: Keynote, bg: "#dcdcdc", art: <><path d="M6 10h7v9H6z" fill="#111" /><path d="M14 10h8v9h-8z" fill="#5a2f28" /><path d="M24 9h8v11h-8z" fill="#1c1c1c" /></> },
  { h: 34, badge: Pages, lines: "#777" }, { h: 34, badge: Pages, lines: "#999", art: <path d="M5 8h20v8H5z" fill="#e9e04a" /> }, { h: 34, badge: Pages, lines: "#aaa" },
  { h: 24, badge: Chrome, art: <><path d="M0 0h42v3H0z" fill="#bcd0f5" /><path d="M12 10l10 5-6 6M22 12h12" stroke="#e8c8a0" fill="none" /></> },
  { h: 30, badge: Notes, bg: "#e4e4e2", art: <><path d="M8 5h24v22H8z" fill="#cfcfcf" /><path d="M10 8h12M10 12h12M10 16h12M10 20h12" stroke="#8e8e8e" /></> },
];

function DockApp({ icon: Icon, on, badge }) {
  return (
    <div className="relative flex flex-1 flex-col items-center">
      <Icon />
      {badge && (
        <span className="absolute -top-1 left-1/2 flex h-[18px] min-w-[18px] items-center justify-center rounded-full bg-[#e5513f] px-[3px] text-[9px] leading-none text-white">{badge}</span>
      )}
      {on && <span className="mt-2 size-[6px] rounded-full bg-[#4a4a4a]" />}
    </div>
  );
}

function Thumb({ h, badge: Badge, bg = "#fdfdfd", art, lines }) {
  return (
    <div className="relative flex h-10 flex-1 items-center justify-center">
      <svg viewBox={"0 0 42 " + h} className="w-[42px] shadow-sm" height={h}>
        <rect width="42" height={h} fill={bg} />
        <path d="M0 1.500h42" stroke="#dedede" strokeWidth="3" />
        {lines && <path d="M34 3v37" stroke="#ececec" strokeWidth="8" />}
        {lines && <path d={stripes} stroke={lines} strokeWidth="1.500" strokeDasharray="7 1 4 1" />}
        {art}
      </svg>
      <span className="absolute right-[3px] bottom-0 flex size-[15px] *:size-full"><Badge /></span>
    </div>
  );
}

function Dock() {
  return (
    <footer className="relative mx-[30px] mt-[18px] mb-[10px] flex h-[66px] rounded-[18px] border-2 border-white/30 bg-linear-to-r from-[#cac8c6] via-[#dadad8] via-25% to-[#c2c2c0] px-1 pt-[10px] shadow-[0_0_2px_rgba(0,0,0,0.4)]">
      {mainApps.map((a, i) => <DockApp key={i} {...a} />)}
      <span className="mx-[10px] -mt-[2px] h-[46px] w-[2px] bg-[#a0a09e]" />
      {moreApps.map((a, i) => <DockApp key={i} {...a} />)}
      <span className="mx-[10px] -mt-[2px] h-[46px] w-[2px] bg-[#a0a09e]" />
      {thumbs.map((t, i) => <Thumb key={i} {...t} />)}
      <div className="flex flex-1 justify-center">
        <svg viewBox="0 0 34 42" className="-mt-1 h-[42px] w-[34px]">
          <path d="M3 6h28l-4 33q-1 3-10 3T7 39z" fill="#efefef" opacity="0.9" />
          <path d="m9 10 2 27M17 10v29M25 10l-2 27" stroke="#cfcfcf" />
          <path d="m3 8 4-6 5 2 4-3 6 3 5-2 4 6-6 3-8-2-8 2z" fill="#d9dfe3" stroke="#8f9699" />
          <path d="m8 5 4 3M20 4l4 4M14 6l3 3" stroke="#38546e" strokeWidth="2" />
        </svg>
      </div>
    </footer>
  );
}

/* ---------- desktop ---------- */

function WindowsBehind() {
  return (
    <div aria-hidden="true" className="absolute inset-0 overflow-hidden">
      <div className="absolute top-[74px] right-0 bottom-[124px] left-10 rounded-[24px] bg-[#dadada]" />
      <div className="absolute top-[74px] right-[60px] bottom-0 left-0 rounded-t-[24px] bg-[#dadada]">
        <div className="absolute bottom-0 left-0 h-[94px] w-[690px] border-r-2 border-[#bdbdbd] bg-[#d0d0d0]" />
        <div className="absolute bottom-0 left-[1374px] h-[94px] w-[2px] bg-[#b5b5b5]" />
        <div className="absolute top-[6px] left-[682px] h-10 w-[420px] rounded-t-xl bg-[#efefef]" />
        <div className="absolute bottom-[64px] left-[57px] flex items-center gap-5 text-[27px] leading-8 font-medium text-[#77787a]">
          <svg viewBox="0 0 26 26" className="size-[26px]" fill="none" stroke="#7195c8" strokeWidth="2.500">
            <rect x="1.500" y="2" width="23" height="6" rx="1" /><path d="M3.500 8v16h19V8M9 14h8" />
          </svg>
          Archive
        </div>
      </div>
    </div>
  );
}

export default function App() {
  return (
    <div className="relative flex min-h-screen flex-col bg-[#191917] font-['Inter',sans-serif]">
      <WindowsBehind />
      <MenuBar />
      <BrowserWindow />
      <Dock />
    </div>
  );
}
